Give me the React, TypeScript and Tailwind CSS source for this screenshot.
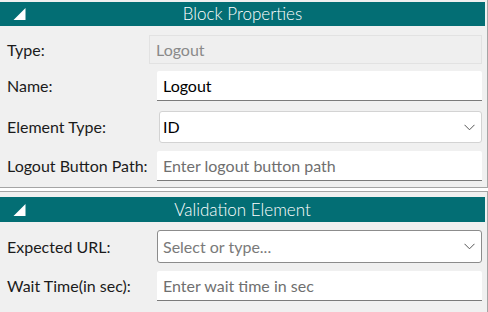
import React from 'react';

const Triangle = () => (
  <svg width="13" height="13" viewBox="0 0 13 13" className="absolute left-[13px] top-1/2 -translate-y-1/2">
    <polygon points="12.5,0.5 12.5,12.5 0.5,12.5" fill="#ffffff" />
  </svg>
);

const Chevron = () => (
  <svg width="11" height="7" viewBox="0 0 11 7" className="ml-auto mr-[6px]">
    <polyline points="0.5,0.8 5.5,5.8 10.5,0.8" fill="none" stroke="#555" strokeWidth="1" />
  </svg>
);

const Header = ({ title, h }: { title: string; h: string }) => (
  <div className={`relative ${h} bg-[#036e74] text-white text-[17px] font-light flex items-center justify-center mr-[2px]`}>
    <Triangle />
    <span>{title}</span>
  </div>
);

const Row = ({ label, children, className }: { label: string; children: React.ReactNode; className: string }) => (
  <div className={`flex items-center ${className}`}>
    <div className="w-[157px] shrink-0 pl-[7px] text-[16px] text-[#1b1b1b]">{label}</div>
    {children}
  </div>
);

export default function App() {
  return (
    <div className="w-[488px] h-[312px] bg-white overflow-hidden" style={{ fontFamily: 'Lato, "Noto Sans", sans-serif' }}>
      {/* Block Properties */}
      <div className="pt-[2px] pb-[6px] bg-[#f0f0f0] border-r border-b border-[#a5a5a5] w-[488px]">
        <Header title="Block Properties" h="h-[24px]" />
        <div className="flex items-center mt-[9px] h-[29px]">
          <div className="w-[149px] shrink-0 pl-[7px] text-[16px] text-[#1b1b1b]">Type:</div>
          <div className="w-[333px] h-full flex items-center bg-[#efefef] border border-[#e2e2e2] pl-[6px] text-[16px] text-[#8a8a8a]">Logout</div>
        </div>
        <Row label="Name:" className="mt-[7px] h-[30px]">
          <div className="w-[325px] h-full flex items-center bg-white border-b border-[#7b7b7b] pl-[6px] text-[16px] text-black rounded-t-[2px]">Logout</div>
        </Row>
        <Row label="Element Type:" className="mt-[10px] h-[32px]">
          <div className="ml-[2px] w-[323px] h-full flex items-center bg-white border border-[#d3d3d3] rounded-[3px] pl-[3px] text-[16px] text-black">
            ID
            <Chevron />
          </div>
        </Row>
        <Row label="Logout Button Path:" className="mt-[8px] h-[30px]">
          <div className="w-[325px] h-full flex items-center bg-white border-b border-[#7b7b7b] pl-[6px] text-[16px] text-[#6f6f6f] rounded-t-[2px]">Enter logout button path</div>
        </Row>
      </div>
      {/* Validation Element */}
      <div className="mt-[3px] pt-[5px] bg-[#f0f0f0] border-t border-r border-[#a5a5a5] w-[488px] h-[130px]">
        <Header title="Validation Element" h="h-[25px]" />
        <Row label="Expected URL:" className="mt-[8px] h-[33px]">
          <div className="w-[325px] h-full flex items-center bg-white border border-[#8c8c8c] rounded-[3px] pl-[5px] text-[16px] text-[#7a7a7a]">
            Select or type...
            <Chevron />
          </div>
        </Row>
        <Row label="Wait Time(in sec):" className="mt-[8px] h-[30px]">
          <div className="w-[325px] h-full flex items-center bg-white border-b border-[#7b7b7b] pl-[6px] text-[16px] text-[#6f6f6f] rounded-t-[2px]">Enter wait time in sec</div>
        </Row>
      </div>
    </div>
  );
}
